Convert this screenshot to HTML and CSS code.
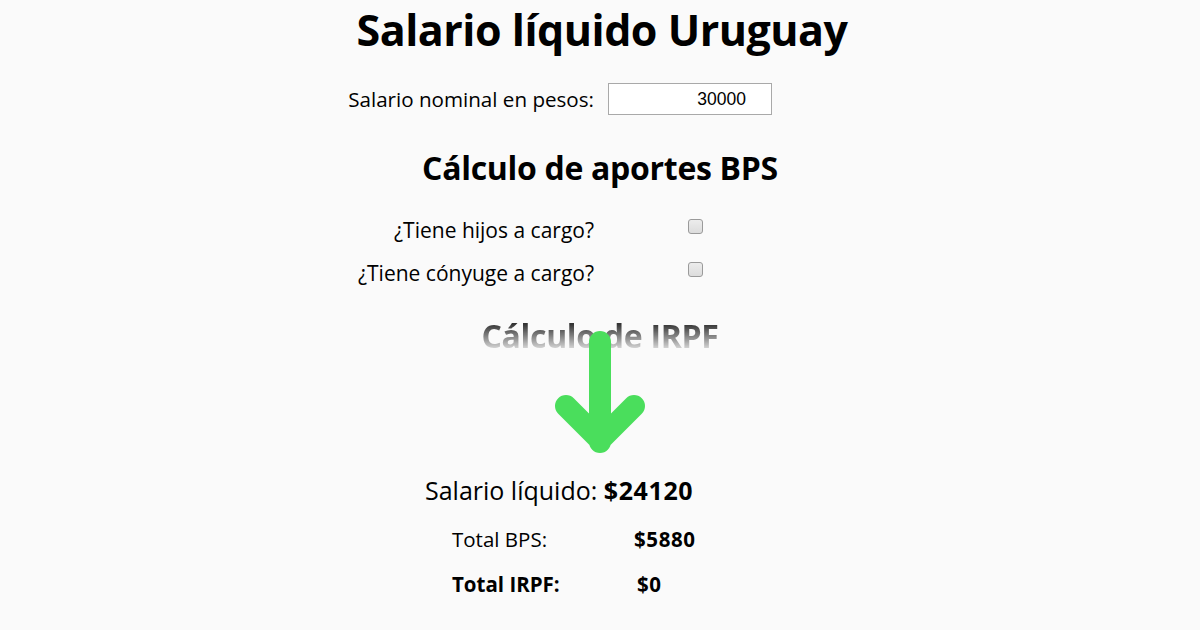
FILE: index.html
```html
<!DOCTYPE html>
<html lang="es">
<head>
<meta charset="utf-8">
<title>Salario líquido Uruguay</title>
<link rel="stylesheet" href="styles.css">
</head>
<body>
<main class="page">
  <h1 class="title">Salario líquido Uruguay</h1>
  <div class="grid">
    <label class="lbl lbl-nominal" for="nominal">Salario nominal en pesos:</label>
    <div class="ctl"><input id="nominal" class="num" type="text" value="30000"></div>
  </div>
  <h2 class="sub">Cálculo de aportes BPS</h2>
  <div class="grid checks">
    <label class="lbl" for="hijos">¿Tiene hijos a cargo?</label>
    <div class="ctl"><span class="box" id="hijos"></span></div>
    <label class="lbl" for="conyuge">¿Tiene cónyuge a cargo?</label>
    <div class="ctl"><span class="box" id="conyuge"></span></div>
  </div>
  <div class="fade-wrap">
    <h2 class="sub fade">Cálculo de IRPF</h2>
    <svg class="arrow" width="120" height="140" viewBox="0 0 120 140">
      <path d="M60 14 V114 M26 78 L60 112 L94 78" fill="none" stroke="#4ade5c" stroke-width="22" stroke-linecap="round" stroke-linejoin="round"/>
    </svg>
  </div>
  <div class="results">
    <p class="liquido">Salario líquido: <b class="big">$24120</b></p>
    <div class="totals">
      <span class="tl">Total BPS:</span><b class="tv">$5880</b>
      <b class="tl">Total IRPF:</b><b class="tv tv2">$0</b>
    </div>
  </div>
</main>
</body>
</html>
```

FILE: styles.css
```css
html, body {
  margin: 0;
  padding: 0;
  background: #fafafa;
}
body {
  font-family: "Open Sans", "Noto Sans", sans-serif;
  color: #000;
  width: 1200px;
  height: 630px;
  overflow: hidden;
}
.page {
  display: flex;
  flex-direction: column;
  align-items: center;
}
.title {
  font-size: 43px;
  font-weight: 700;
  margin: 2px 0 0 4px;
  line-height: 56px;
  letter-spacing: -0.5px;
}
.grid {
  display: grid;
  grid-template-columns: 594px 594px;
  column-gap: 12px;
  align-items: center;
  margin-top: 25px;
}
.lbl {
  text-align: right;
  font-size: 21px;
}
.lbl-nominal {
  font-size: 20.6px;
}
.num {
  width: 164px;
  height: 32px;
  box-sizing: border-box;
  border: 1px solid #a9a9a9;
  background: #fff;
  font-family: "Liberation Sans", Arial, sans-serif;
  font-size: 17.5px;
  text-align: right;
  padding: 0 25px 0 4px;
  margin: 0 0 0 2px;
  display: block;
}
.sub {
  font-size: 32px;
  font-weight: 700;
  margin: 33px 0 0 0;
  line-height: 40px;
  letter-spacing: -0.3px;
}
.checks {
  margin-top: 27px;
  row-gap: 13px;
}
.checks .lbl {
  line-height: 30px;
}
.box {
  display: block;
  width: 13px;
  height: 13px;
  margin: -8px 0 0 82px;
  border: 1px solid #9a9a9a;
  border-radius: 3px;
  background: linear-gradient(#ececec, #dcdcdc);
}
.fade-wrap {
  position: relative;
  margin-top: 28px;
  height: 130px;
}
.fade {
  margin: 0;
  -webkit-mask-image: linear-gradient(to bottom, #000 20%, transparent 95%);
  mask-image: linear-gradient(to bottom, #000 20%, transparent 95%);
  color: #333;
}
.arrow {
  position: absolute;
  left: 50%;
  top: 12px;
  transform: translateX(-60px);
}
.results {
  width: 350px;
  margin-top: 27px;
  display: flex;
  flex-direction: column;
  align-items: flex-start;
}
.liquido {
  margin: 0;
  font-size: 25px;
  line-height: 34px;
}
.big {
  letter-spacing: 0.6px;
}
.totals {
  display: grid;
  grid-template-columns: 182px auto;
  margin: 16px 0 0 27px;
  row-gap: 13px;
  font-size: 20.5px;
  line-height: 32px;
}
.tv {
  letter-spacing: 0.6px;
}
.tv2 {
  margin-left: 3px;
}
```
